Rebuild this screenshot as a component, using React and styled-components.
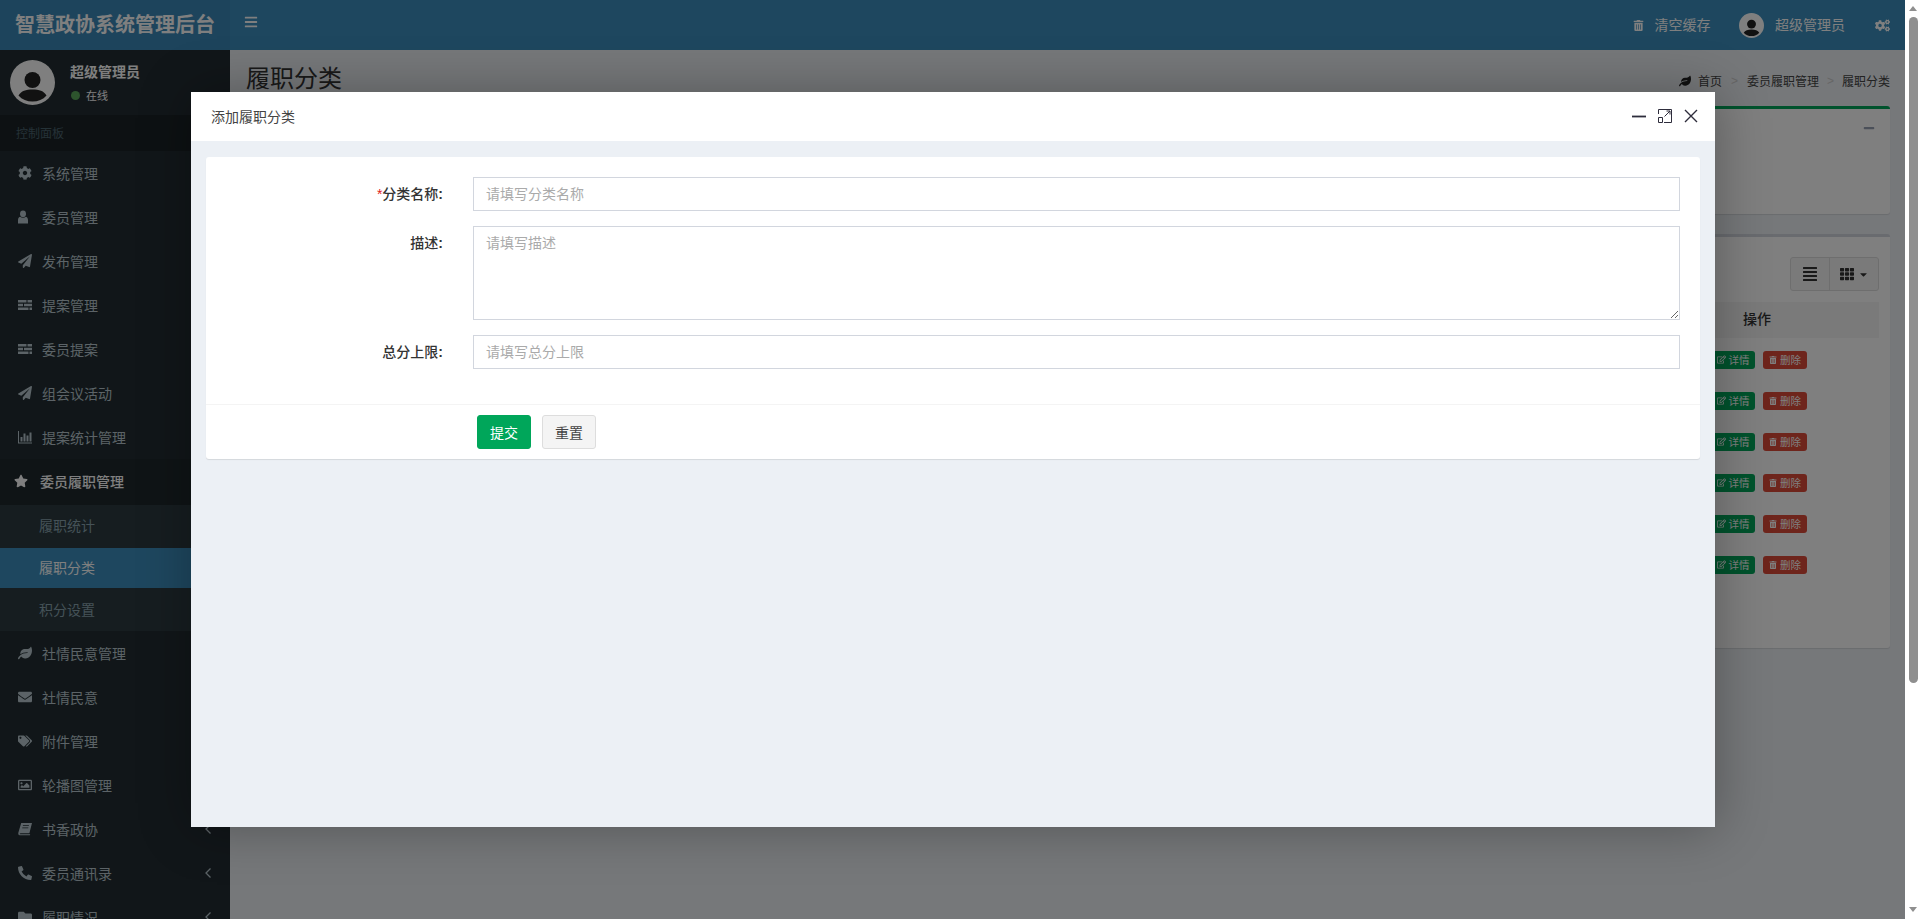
import React from "react";
import styled, { createGlobalStyle } from "styled-components";
import { FaBars, FaCog, FaPaperPlane, FaStar, FaLeaf, FaEnvelope, FaTags, FaRegImage, FaPhoneAlt, FaFolder, FaTrashAlt, FaCogs, FaAlignJustify, FaTh, FaRegEdit, FaCaretDown, FaMinus } from "react-icons/fa";

const Global = createGlobalStyle`
  html, body { margin: 0; padding: 0; height: 100%; overflow: hidden; }
  body { font-family: "Liberation Sans", "Noto Sans CJK SC", sans-serif; font-size: 14px; color: #333; background: #fff; }
  * { box-sizing: border-box; }
`;
const Frame = styled.div`display: flex; height: 100vh; overflow: hidden;`;
const Main = styled.div`flex: 1; min-width: 0; position: relative; display: flex; flex-direction: column; overflow: hidden;`;
const Scrollbar = styled.div`width: 15px; flex: none; background: #fff; display: flex; flex-direction: column; align-items: center; padding-left: 1px;`;
const ArrowUp = styled.i`width: 0; height: 0; margin-top: 6px; border-left: 4.5px solid transparent; border-right: 4.5px solid transparent; border-bottom: 5px solid #8f8f8f;`;
const Thumb = styled.div`width: 9px; height: 666px; margin-top: 6px; border-radius: 5px; background: #8f8f8f;`;
const ArrowDown = styled.i`width: 0; height: 0; margin-top: auto; margin-bottom: 7px; border-left: 4.5px solid transparent; border-right: 4.5px solid transparent; border-top: 5px solid #8f8f8f;`;
const TopBar = styled.header`display: flex; height: 50px; background: #3d8fbf; color: #fff; flex: none;`;
const Logo = styled.div`width: 230px; height: 50px; line-height: 50px; text-align: center; font-size: 20px; font-weight: 700; color: #fff; white-space: nowrap; background: #3a89b8;`;
const Toggle = styled.div`width: 42px; display: flex; align-items: center; justify-content: center; font-size: 14px; height: 43px;`;
const TopRight = styled.div`margin-left: auto; display: flex; align-items: center; padding-right: 15px; font-size: 14px; height: 50px;`;
const TopLink = styled.div`display: flex; align-items: center; gap: ${p => p.$gap || 10}px; margin-left: ${p => p.$ml || 0}px;`;
const TopText = styled.span`padding-bottom: 2px;`;
const Body = styled.div`display: flex; flex: 1; min-height: 0;`;
const Sidebar = styled.aside`width: 230px; background: #222d32; flex: none;`;
const UserPanel = styled.div`display: flex; height: 65px; padding: 10px; align-items: flex-start;`;
const UserInfo = styled.div`margin-left: 15px; padding-top: 4px; color: #fff;`;
const UserName = styled.div`font-size: 14px; font-weight: 600; line-height: 17px;`;
const Status = styled.div`display: flex; align-items: center; font-size: 11px; margin-top: 6px; gap: 6px;`;
const Dot = styled.i`width: 9px; height: 9px; margin-left: 1px; border-radius: 50%; background: #5aa85a;`;
const MenuHeader = styled.div`height: 36px; padding: 2px 0 0 16px; line-height: 34px; font-size: 12px; color: #4b646f; background: #1a2226;`;
const MenuItem = styled.div`display: flex; align-items: center; height: ${p => p.$open ? 46 : 44}px; padding: 0 0 ${p => p.$open ? 3 : 0}px ${p => p.$open ? 14 : 18}px; font-size: 14px; color: ${p => p.$open ? "#fff" : "#b8c7ce"}; background: ${p => p.$open ? "#1e282c" : "transparent"}; font-weight: ${p => p.$open ? 500 : 400};
  & > svg:first-child { width: 14px; height: 14px; flex: none; }
`;
const ItemLabel = styled.span`margin-left: ${p => p.$open ? 12 : 10}px;`;
const Chevron = styled.span`margin-left: auto; margin-right: 18px; display: flex;`;
const SubMenu = styled.div`background: #2c3b41;`;
const SubItem = styled.div`height: ${p => p.$h || 43}px; line-height: ${p => p.$lh || p.$h || 43}px; padding-left: 39px; font-size: 14px; color: ${p => p.$active ? "#fff" : "#8aa4af"}; background: ${p => p.$active ? "#3d8fbf" : "transparent"};`;
const Content = styled.main`flex: 1; background: #ecf0f5; padding: 0 15px;`;
const TitleRow = styled.div`display: flex; height: 56px; align-items: flex-start; justify-content: space-between;`;
const PageTitle = styled.h1`margin: 14px 0 0 1px; font-size: 24px; font-weight: 400; line-height: 30px; color: #333;`;
const Crumbs = styled.div`display: flex; align-items: center; font-size: 12px; margin-top: 22px; color: #444;`;
const CrumbSep = styled.span`color: #ccc; margin: 0 ${p => p.$m || 9}px;`;
const CrumbIcon = styled.span`display: flex; margin-right: 7px; font-size: 12px; color: #222;`;
const Box = styled.section`background: #fff; border-top: 3px solid ${p => p.$accent || "#d2d6de"}; border-radius: 3px; box-shadow: 0 1px 1px rgba(0,0,0,.1); margin-bottom: 20px; height: ${p => p.$h}px; padding: 10px 11px 10px 10px;`;
const Collapse = styled.div`display: flex; justify-content: flex-end; padding: 3px 4px 0 0; font-size: 12px; color: #97a0b3;`;
const ToolRow = styled.div`display: flex; justify-content: flex-end; margin-top: 10px;`;
const BtnGroup = styled.div`display: flex; height: 34px; border: 1px solid #ddd; border-radius: 3px; background: #f4f4f4; color: #333;`;
const GroupBtn = styled.div`display: flex; align-items: center; justify-content: center; width: ${p => p.$w}px; gap: 4px; font-size: ${p => p.$fs || 14}px; & + & { border-left: 1px solid #ddd; }`;
const TableHead = styled.div`display: flex; height: 36px; margin-top: 11px; background: #f5f5f5; font-size: 14px; font-weight: 500; justify-content: flex-end;`;
const OpCell = styled.div`width: 244px; text-align: center; line-height: 34px;`;
const Rows = styled.div`display: flex; flex-direction: column; padding-top: 1px;`;
const Row = styled.div`display: flex; height: 41px; align-items: center; justify-content: flex-end; gap: 8px; padding-right: 72px;`;
const Small = styled.span`display: inline-flex; align-items: center; gap: 3px; height: 18px; width: 44px; justify-content: center; border-radius: 3px; font-size: 10.5px; color: #fff; background: ${p => p.$bg};`;
const Shade = styled.div`position: absolute; inset: 0; background: rgba(0,0,0,.5);`;
const Modal = styled.div`position: absolute; left: 191px; top: 92px; width: 1524px; height: 735px; background: #ecf0f5; display: flex; flex-direction: column; box-shadow: 1px 1px 50px rgba(0,0,0,.3);`;
const ModalHead = styled.div`flex: none; height: 49px; background: #fff; display: flex; align-items: center; padding: 0 0 1px 20px; font-size: 14px; color: #444;`;
const ModalTools = styled.div`margin-left: auto; display: flex; align-items: center; gap: 12px; padding-right: 17px; color: #2e2d3c;`;
const ModalBody = styled.div`flex: 1; padding: 16px 15px;`;
const Card = styled.div`background: #fff; border-radius: 3px; box-shadow: 0 1px 1px rgba(0,0,0,.1);`;
const Form = styled.div`padding: 20px 20px 35px; display: flex; flex-direction: column; gap: 15px; border-bottom: 1px solid #f4f4f4;`;
const Field = styled.div`display: flex; align-items: flex-start;`;
const Label = styled.label`width: 217px; flex: none; text-align: right; font-size: 14px; font-weight: 500; line-height: 34px; color: #333; margin-right: 30px; white-space: nowrap;`;
const Req = styled.span`color: #e02020;`;
const Colon = styled.span`font-weight: 700;`;
const Input = styled.input`flex: 1; height: 34px; border: 1px solid #d2d6de; padding: 6px 12px; font: 14px "Liberation Sans", "Noto Sans CJK SC", sans-serif; outline: none; &::placeholder { color: #aaa; opacity: 1; }`;
const Area = styled.textarea`flex: 1; height: 94px; border: 1px solid #d2d6de; padding: 6px 12px; font: 14px/20px "Liberation Sans", "Noto Sans CJK SC", sans-serif; outline: none; display: block; &::placeholder { color: #aaa; opacity: 1; }`;
const Actions = styled.div`display: flex; gap: 11px; padding: 10px 0 10px 271px;`;
const Btn = styled.button`height: 34px; width: 54px; border-radius: 3px; font: 14px "Liberation Sans", "Noto Sans CJK SC", sans-serif; border: 1px solid ${p => p.$primary ? "#00a65a" : "#ddd"}; background: ${p => p.$primary ? "#00a65a" : "#f4f4f4"}; color: ${p => p.$primary ? "#fff" : "#444"}; padding: 0;`;

const IconTasks = () => (
  <svg viewBox="0 0 14 14" fill="currentColor"><path d="M0 2h8.5v2.5H0zM9.5 2H14v2.5H9.5zM0 5.75h5v2.5H0zM6 5.75h8v2.5H6zM0 9.5h10.5V12H0zM11.5 9.5H14V12h-2.5z" /></svg>
);
const IconUser = () => (
  <svg viewBox="0 0 14 14" fill="currentColor"><ellipse cx="5" cy="3.8" rx="3" ry="3.4" /><path d="M0 13.5V10c0-2 1-3.2 2.4-3.3C3 7.3 4 7.8 5 7.8s2-.5 2.6-1.1C9 6.8 10 8 10 10v3.5z" /></svg>
);
const IconChart = () => (
  <svg viewBox="0 0 14 14" fill="currentColor"><path d="M0 1h1v11.5h14v1H0z" /><path d="M2.5 7h2v4.5h-2zM5.5 3.5h2v8h-2zM8.5 5.5h2v6h-2zM11.5 2.5h2v9h-2z" /></svg>
);
const IconBook = () => (
  <svg viewBox="0 0 14 14" fill="currentColor"><path fillRule="evenodd" d="M3.2 1H14l-2.6 10.2H2.6c-1 0-1.2 1.1-.2 1.1h9.8l-.3 1H1.8C.5 13.3 0 12 .4 10.5zM5 3.2l-.2.9h6l.2-.9zM4.4 5.4l-.2.9h6l.2-.9z" /></svg>
);
const IconAngle = () => (
  <svg width="8" height="12" viewBox="0 0 8 12" fill="none" stroke="currentColor" strokeWidth="1.3"><path d="M6.5 1.5L2 6l4.5 4.5" /></svg>
);
const Avatar = ({ size }) => (
  <svg width={size} height={size} viewBox="0 0 45 45" style={{ flex: "none" }}>
    <circle cx="22.5" cy="22.5" r="22.5" fill="#fff" />
    <circle cx="22.5" cy="20" r="8" fill="#222" />
    <path d="M8.5 35.5C11 31 16 29.5 22.5 29.5S34 31 36.5 35.5C33 39.5 28 41.5 22.5 41.5S12 39.5 8.5 35.5z" fill="#222" />
  </svg>
);

const menu1 = [[FaCog,"系统管理"],[IconUser,"委员管理"],[FaPaperPlane,"发布管理"],[IconTasks,"提案管理"],[IconTasks,"委员提案"],[FaPaperPlane,"组会议活动"],[IconChart,"提案统计管理"]];
const menu2 = [[FaLeaf,"社情民意管理"],[FaEnvelope,"社情民意"],[FaTags,"附件管理"],[FaRegImage,"轮播图管理"],[IconBook,"书香政协",1],[FaPhoneAlt,"委员通讯录",1],[FaFolder,"履职情况",1]];

const Item = ({ icon: I, label, arrow }) => (
  <MenuItem><I /><ItemLabel>{label}</ItemLabel>{arrow ? <Chevron><IconAngle /></Chevron> : null}</MenuItem>
);

export default function App() {
  return (
    <Frame>
      <Global />
      <Main>
        <TopBar>
          <Logo>智慧政协系统管理后台</Logo>
          <Toggle><FaBars /></Toggle>
          <TopRight>
            <TopLink $gap={11}><FaTrashAlt size={11} /><TopText>清空缓存</TopText></TopLink>
            <TopLink $ml={28.5} $gap={11}><Avatar size={25} /><TopText>超级管理员</TopText></TopLink>
            <TopLink $ml={30}><FaCogs size={15} /></TopLink>
          </TopRight>
        </TopBar>
        <Body>
          <Sidebar>
            <UserPanel>
              <Avatar size={45} />
              <UserInfo><UserName>超级管理员</UserName><Status><Dot />在线</Status></UserInfo>
            </UserPanel>
            <MenuHeader>控制面板</MenuHeader>
            {menu1.map(([I, l]) => <Item key={l} icon={I} label={l} />)}
            <MenuItem $open><FaStar /><ItemLabel $open>委员履职管理</ItemLabel></MenuItem>
            <SubMenu>
              <SubItem>履职统计</SubItem>
              <SubItem $active $h={40}>履职分类</SubItem>
              <SubItem $lh={45}>积分设置</SubItem>
            </SubMenu>
            {menu2.map(([I, l, a]) => <Item key={l} icon={I} label={l} arrow={a} />)}
          </Sidebar>
          <Content>
            <TitleRow>
              <PageTitle>履职分类</PageTitle>
              <Crumbs>
                <CrumbIcon><FaLeaf /></CrumbIcon>首页<CrumbSep>&gt;</CrumbSep>委员履职管理<CrumbSep $m={8}>&gt;</CrumbSep>履职分类
              </Crumbs>
            </TitleRow>
            <Box $accent="#00a65a" $h={108}>
              <Collapse><FaMinus /></Collapse>
            </Box>
            <Box $h={414}>
              <ToolRow>
                <BtnGroup>
                  <GroupBtn $w={38} $fs={16}><FaAlignJustify /></GroupBtn>
                  <GroupBtn $w={49}><FaTh /><FaCaretDown size={11} /></GroupBtn>
                </BtnGroup>
              </ToolRow>
              <TableHead><OpCell>操作</OpCell></TableHead>
              <Rows>
                {[0,1,2,3,4,5].map(i => (
                  <Row key={i}>
                    <Small $bg="#00a65a"><FaRegEdit size={9} />详情</Small>
                    <Small $bg="#dd4b39"><FaTrashAlt size={8} />删除</Small>
                  </Row>
                ))}
              </Rows>
            </Box>
          </Content>
        </Body>
        <Shade />
        <Modal>
          <ModalHead>
            添加履职分类
            <ModalTools>
              <svg width="14" height="14" viewBox="0 0 14 14"><path d="M0 7.5h14" stroke="currentColor" strokeWidth="1.8" /></svg>
              <svg width="14" height="14" viewBox="0 0 14 14" fill="none" stroke="currentColor" strokeWidth="1"><path d="M.5 5V.5h13v13H6M.5 8.5h4v5h-4zM6.5 7.5l5.5-5.5M8.5 2H12v3.5" /></svg>
              <svg width="14" height="14" viewBox="0 0 14 14" fill="none" stroke="currentColor" strokeWidth="1.4"><path d="M1 1l12 12M13 1L1 13" /></svg>
            </ModalTools>
          </ModalHead>
          <ModalBody>
            <Card>
              <Form>
                <Field><Label><Req>*</Req>分类名称<Colon>:</Colon></Label><Input placeholder="请填写分类名称" /></Field>
                <Field><Label>描述<Colon>:</Colon></Label><Area placeholder="请填写描述" /></Field>
                <Field><Label>总分上限<Colon>:</Colon></Label><Input placeholder="请填写总分上限" /></Field>
              </Form>
              <Actions><Btn $primary>提交</Btn><Btn>重置</Btn></Actions>
            </Card>
          </ModalBody>
        </Modal>
      </Main>
      <Scrollbar><ArrowUp /><Thumb /><ArrowDown /></Scrollbar>
    </Frame>
  );
}
